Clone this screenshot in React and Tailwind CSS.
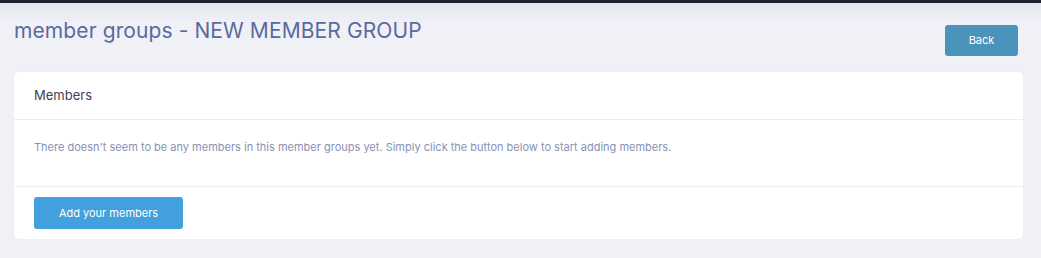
export default function App() {
  return (
    <div className="w-[1041px] h-[258px] bg-[#f0f1f7] overflow-hidden" style={{ fontFamily: "Inter, 'Noto Sans', sans-serif" }}>
      <div className="h-[3px] bg-[#1f2133]" />
      <div className="h-[20px] bg-gradient-to-b from-[#e6e6ee] to-[#f0f1f7]" />
      <div className="pl-[14px] pr-[18px]">
        {/* header row */}
        <div className="flex justify-between items-start h-[49px]">
          <h1 className="text-[21px] leading-[20px] text-[#5a6a9e] tracking-[0.1px] -mt-[2px]">
            member groups - NEW MEMBER GROUP
          </h1>
          <button className="mt-[2px] mr-[5px] w-[73px] h-[31px] rounded-[3px] bg-[#4a93bb] text-white text-[11px]">
            Back
          </button>
        </div>
        {/* card */}
        <div className="bg-white rounded-[5px] shadow-[0_0_2px_rgba(0,0,0,0.04)]">
          <div className="h-[48px] flex items-center px-[20px] border-b border-[#ebedf3]">
            <span className="text-[13px] text-[#3f4254]">Members</span>
          </div>
          <div className="h-[67px] pt-[20px] px-[20px] border-b border-[#ebedf3]">
            <p className="text-[11px] leading-[14px] text-[#8a90b4]">
              There doesn't seem to be any members in this member groups yet. Simply click the button below to start adding members.
            </p>
          </div>
          <div className="pt-[10px] pb-[10px] px-[20px]">
            <button className="w-[149px] h-[32px] rounded-[3px] bg-[#42a0dc] text-white text-[11px]">
              Add your members
            </button>
          </div>
        </div>
      </div>
    </div>
  );
}
